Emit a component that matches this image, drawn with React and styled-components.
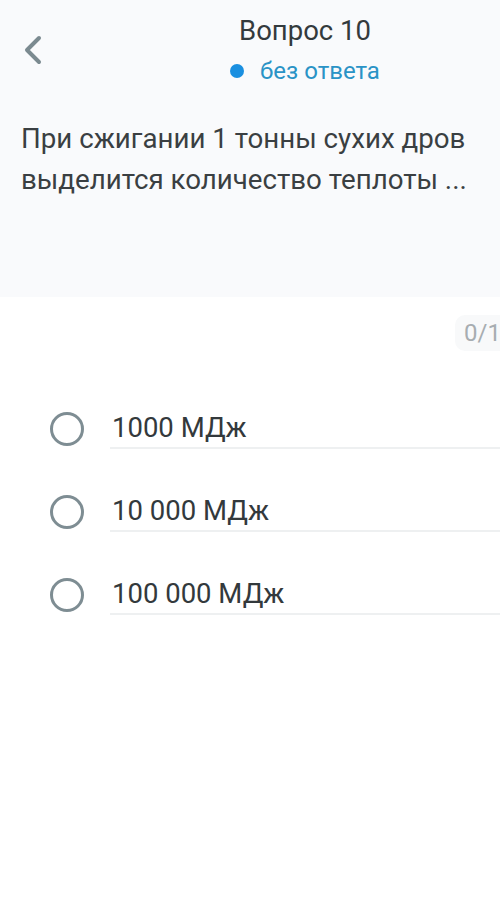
import React, { useState } from "react";
import styled, { createGlobalStyle } from "styled-components";

const GlobalStyle = createGlobalStyle`
  html, body {
    margin: 0;
    padding: 0;
    background: #ffffff;
    font-family: Roboto, "Noto Sans", sans-serif;
  }
`;

const Page = styled.div`
  width: 500px;
  min-height: 899px;
  background: #ffffff;
  overflow: hidden;
`;

const Top = styled.div`
  background: #f9fafc;
  height: 297px;
  box-sizing: border-box;
  padding-top: 10px;
`;

const Header = styled.div`
  display: grid;
  grid-template-columns: 80px 1fr 80px;
  align-items: center;
  height: 80px;
`;

const BackButton = styled.button`
  background: unset;
  border: none;
  padding: 0 0 0 23px;
  display: flex;
  align-items: center;
  cursor: pointer;
`;

const Titles = styled.div`
  display: flex;
  flex-direction: column;
  align-items: center;
  padding-left: 110px;
  gap: 9px;
`;

const Title = styled.div`
  font-size: 27.5px;
  color: #333a3d;
  line-height: 32px;
  white-space: nowrap;
`;

const Status = styled.div`
  display: flex;
  align-items: center;
  gap: 16px;
  font-size: 24px;
  line-height: 30px;
  color: #2a93c6;
  white-space: nowrap;
`;

const Dot = styled.span`
  width: 14px;
  height: 14px;
  border-radius: 50%;
  background: #1a8fe0;
`;

const Question = styled.p`
  margin: 28px 0 0;
  padding: 0 21px;
  font-size: 27.7px;
  line-height: 41px;
  color: #3a3f42;
`;

const ScoreRow = styled.div`
  display: flex;
  justify-content: flex-end;
  margin-top: 18px;
`;

const Score = styled.div`
  background: #f8f9fa;
  color: #a7adb1;
  font-size: 24px;
  line-height: 36px;
  padding: 0 0 0 9px;
  margin-right: -8px;
  border-radius: 10px 0 0 10px;
  width: 44px;
  overflow: hidden;
  white-space: nowrap;
`;

const Options = styled.div`
  display: flex;
  flex-direction: column;
  margin-top: 36px;
`;

const OptionRow = styled.div`
  display: flex;
  align-items: stretch;
  height: 83px;
  cursor: pointer;
`;

const RadioCell = styled.div`
  width: 110px;
  display: flex;
  justify-content: center;
  align-items: center;
  padding-left: 46px;
  padding-right: 22px;
  box-sizing: border-box;
`;

const Radio = styled.span`
  width: 34px;
  height: 34px;
  flex-shrink: 0;
  box-sizing: border-box;
  border-radius: 50%;
  border: 3.5px solid ${(p) => (p.checked ? "#1a8fe0" : "#7e8d93")};
  display: flex;
  align-items: center;
  justify-content: center;
  &::after {
    content: "";
    width: 16px;
    height: 16px;
    border-radius: 50%;
    background: #1a8fe0;
    display: ${(p) => (p.checked ? "block" : "none")};
  }
`;

const OptionText = styled.div`
  flex: 1;
  display: flex;
  align-items: center;
  font-size: 27.5px;
  color: #33393c;
  border-bottom: 2px solid #eef0f1;
  margin-bottom: 21px;
  padding-left: 2px;
  padding-top: 21px;
  white-space: nowrap;
`;

const answers = ["1000 МДж", "10 000 МДж", "100 000 МДж"];

const App = () => {
  const [picked, setPicked] = useState(null);

  return (
    <Page>
      <GlobalStyle />
      <Top>
        <Header>
          <BackButton>
            <svg width="20" height="30" viewBox="0 0 20 30">
              <path
                d="M16 3 L4 15 L16 27"
                fill="none"
                stroke="#7b8a90"
                strokeWidth="4"
                strokeLinecap="round"
                strokeLinejoin="round"
              />
            </svg>
          </BackButton>
          <Titles>
            <Title>Вопрос 10</Title>
            <Status>
              <Dot />
              без ответа
            </Status>
          </Titles>
          <div />
        </Header>
        <Question>
          При сжигании 1 тонны сухих дров выделится количество теплоты ...
        </Question>
      </Top>
      <ScoreRow>
        <Score>0/1</Score>
      </ScoreRow>
      <Options>
        {answers.map((a, i) => (
          <OptionRow key={a} onClick={() => setPicked(i)}>
            <RadioCell>
              <Radio checked={picked === i} />
            </RadioCell>
            <OptionText>{a}</OptionText>
          </OptionRow>
        ))}
      </Options>
    </Page>
  );
};

export default App;
